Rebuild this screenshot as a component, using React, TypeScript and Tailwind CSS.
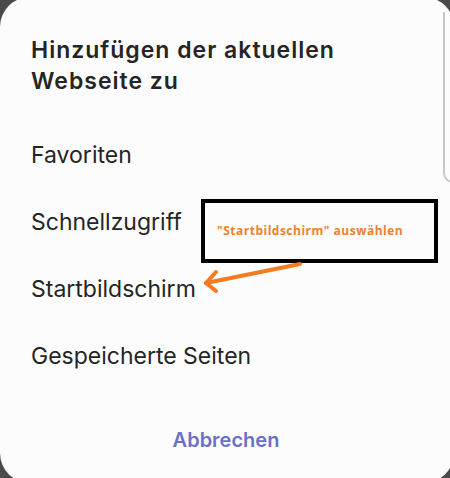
import React from "react";

export default function App() {
  const items = ["Favoriten", "Schnellzugriff", "Startbildschirm", "Gespeicherte Seiten"];
  return (
    <div className="w-[450px] h-[478px] bg-[#4a4a4a] overflow-hidden relative" style={{ fontFamily: "Inter, Roboto, 'Noto Sans', sans-serif" }}>
      <div className="w-[454px] h-[486px] mt-[-3px] bg-[#fcfcfc] rounded-[30px] flex flex-col pl-[31px] pt-[38px]">
        <div className="text-[23px] leading-[31px] font-semibold tracking-[1px] text-[#252525]">
          Hinzufügen der aktuellen
          <br />
          Webseite zu
        </div>
        <div className="mt-[25px] flex flex-col">
          {items.map((t) => (
            <div key={t} className="h-[67px] leading-[67px] text-[23px] text-[#252525]">
              {t}
            </div>
          ))}
        </div>
        <div className="mt-[30px] pr-[31px] text-center text-[20px] leading-[40px] font-semibold text-[#6b70c6] ml-[-2px]">
          Abbrechen
        </div>
      </div>

      {/* right edge line */}
      <div className="absolute left-[443px] top-[12px] w-[20px] h-[171px] border-l-2 border-b-2 border-[#c8c8c8] rounded-bl-[10px]" />

      {/* annotation box */}
      <div className="absolute left-[201px] top-[199px] w-[237px] h-[64px] border-4 border-black bg-[#fcfcfc] flex items-center pl-[12px]">
        <span className="text-[12px] font-bold tracking-[0.5px] text-[#f0802a]" style={{ fontFamily: "'Open Sans', 'Liberation Sans', sans-serif" }}>
          "Startbildschirm" auswählen
        </span>
      </div>

      {/* arrow */}
      <svg className="absolute left-0 top-0" width="450" height="478" viewBox="0 0 450 478">
        <g stroke="#f47b20" strokeWidth="4" strokeLinecap="round" fill="none" strokeLinejoin="round">
          <path d="M300 264 L206 283" />
          <path d="M216 272 L206 283 L216 291" />
        </g>
      </svg>
    </div>
  );
}
